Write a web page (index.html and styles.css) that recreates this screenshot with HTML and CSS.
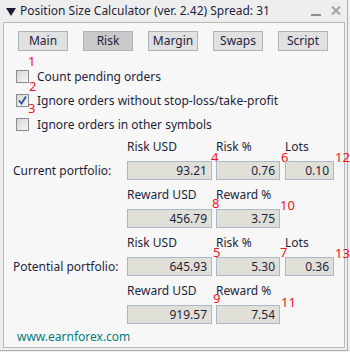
FILE: index.html
```html
<!DOCTYPE html>
<html>
<head>
<meta charset="utf-8">
<link rel="stylesheet" href="styles.css">
</head>
<body>
<div class="window">
  <div class="titlebar">
    <svg class="tri" width="10" height="8" viewBox="0 0 10 8"><polygon points="0,0 10,0 5,8" fill="#1b1b33"/></svg>
    <span class="title">Position Size Calculator (ver. 2.42) Spread: 31</span>
    <span class="min"></span>
    <svg class="close" width="10" height="9" viewBox="0 0 10 9"><path d="M1 0.5 L9 8.5 M9 0.5 L1 8.5" stroke="#a9a9a9" stroke-width="2.2"/></svg>
  </div>
  <div class="panel">
    <div class="tabs">
      <span class="tab">Main</span>
      <span class="tab active">Risk</span>
      <span class="tab">Margin</span>
      <span class="tab">Swaps</span>
      <span class="tab">Script</span>
    </div>
    <div class="checks">
      <div class="check">
        <span class="box"></span>
        <span class="num n1">1</span>
        <span>Count pending orders</span>
      </div>
      <div class="check">
        <span class="box"><svg width="11" height="11" viewBox="0 0 11 11"><path d="M2 5.5 L4.5 8.5 L9 1.5" fill="none" stroke="#2d4c9c" stroke-width="1.7"/></svg></span>
        <span class="num n2">2</span>
        <span>Ignore orders without stop-loss/take-profit</span>
      </div>
      <div class="check">
        <span class="box"></span>
        <span class="num n3">3</span>
        <span>Ignore orders in other symbols</span>
      </div>
    </div>
    <div class="grid">
      <span class="head c1">Risk USD</span>
      <span class="head c2">Risk %</span>
      <span class="head c3">Lots</span>
      <span class="rowlabel">Current portfolio:</span>
      <span class="field w1">93.21<span class="num" style="left:83px;top:-10px">4</span></span>
      <span class="field w2">0.76<span class="num" style="left:64px;top:-10px">6</span></span>
      <span class="field w3">0.10<span class="num" style="left:49px;top:-10px">12</span></span>

      <span class="head c1">Reward USD</span>
      <span class="head c2">Reward %</span>
      <span class="spacer"></span>
      <span class="blank"></span>
      <span class="field w1">456.79<span class="num" style="left:84px;top:-12px">8</span></span>
      <span class="field w2">3.75<span class="num" style="left:63px;top:-10px">10</span></span>
      <span class="blank"></span>

      <span class="head c1">Risk USD</span>
      <span class="head c2">Risk %</span>
      <span class="head c3">Lots</span>
      <span class="rowlabel">Potential portfolio:</span>
      <span class="field w1">645.93<span class="num" style="left:85px;top:-11px">5</span></span>
      <span class="field w2">5.30<span class="num" style="left:63px;top:-11px">7</span></span>
      <span class="field w3">0.36<span class="num" style="left:49px;top:-10px">13</span></span>

      <span class="head c1">Reward USD</span>
      <span class="head c2">Reward %</span>
      <span class="spacer"></span>
      <span class="blank"></span>
      <span class="field w1">919.57<span class="num" style="left:85px;top:-13px">9</span></span>
      <span class="field w2">7.54<span class="num" style="left:64px;top:-9px">11</span></span>
      <span class="blank"></span>
    </div>
    <div class="footer">www.earnforex.com</div>
  </div>
</div>
</body>
</html>
```
FILE: styles.css
```css
html, body {
  margin: 0;
  padding: 0;
  background: #eeeeee;
}
body {
  width: 350px;
  height: 352px;
  overflow: hidden;
  font-family: "Noto Sans", "Open Sans", sans-serif;
  font-size: 12px;
  color: #1f1f3c;
}
.window {
  width: 348px;
  height: 351px;
  box-sizing: border-box;
  border-right: 1px solid #b0b0b0;
  border-bottom: 1px solid #b0b0b0;
  background: #eeeeee;
}
.titlebar {
  height: 22px;
  display: flex;
  align-items: center;
  padding: 0 6px 0 6px;
  box-sizing: border-box;
}
.tri {
  margin-top: 2px;
  margin-right: 4px;
  flex: none;
}
.title {
  white-space: nowrap;
  line-height: 22px;
}
.min {
  margin-left: auto;
  width: 10px;
  height: 2px;
  background: #8e8e8e;
  margin-top: 7px;
  margin-right: 10px;
}
.close {
  margin-top: -2px;
  flex: none;
}
.panel {
  margin-left: 3px;
  width: 342px;
  height: 326px;
  box-sizing: border-box;
  border: 1px solid #b9b9b9;
  background: #f7f7f7;
  padding: 8px 0 0 14px;
  position: relative;
}
.tabs {
  display: flex;
  gap: 15px;
}
.tab {
  width: 50px;
  height: 20px;
  box-sizing: border-box;
  border: 1px solid #aab4be;
  background: #e1e1e1;
  display: flex;
  align-items: center;
  justify-content: center;
  line-height: 18px;
}
.tab.active {
  background: #c9c9c9;
}
.checks {
  margin-top: 13px;
  margin-left: -2px;
}
.check {
  height: 24px;
  display: flex;
  align-items: center;
  position: relative;
}
.box {
  width: 13px;
  height: 13px;
  box-sizing: border-box;
  border: 1px solid #8c8c8c;
  background: linear-gradient(135deg, #d6d6d6, #f6f6f6);
  margin-right: 8px;
  margin-top: 1px;
  display: flex;
  align-items: center;
  justify-content: center;
  flex: none;
}
.num {
  position: absolute;
  color: #f0141e;
  font-size: 13px;
  line-height: 10px;
  white-space: nowrap;
}
.n1 { left: 12px; top: -8px; }
.n2 { left: 13px; top: -7px; }
.n3 { left: 12px; top: -9px; }
.grid {
  margin-top: 4px;
  margin-left: -5px;
  display: grid;
  grid-template-columns: 114px 89px 69px 49px;
  grid-template-rows: 21px 27px 21px 27px 21px 27px 21px 19px;
}
.head {
  line-height: 14px;
  white-space: nowrap;
}
.c1 { grid-column: 2; }
.c2 { grid-column: 3; }
.c3 { grid-column: 4; }
.spacer { grid-column: 4; }
.rowlabel {
  grid-column: 1;
  line-height: 19px;
  white-space: nowrap;
}
.field {
  position: relative;
  height: 19px;
  box-sizing: border-box;
  border: 1px solid #a9b9c9;
  background: #e0dfd8;
  text-align: right;
  padding-right: 4px;
  line-height: 17px;
}
.w1 { width: 85px; }
.w2 { width: 64px; }
.w3 { width: 49px; }
.footer {
  margin-top: 6px;
  margin-left: -1px;
  line-height: 14px;
  color: #00807e;
}
```
